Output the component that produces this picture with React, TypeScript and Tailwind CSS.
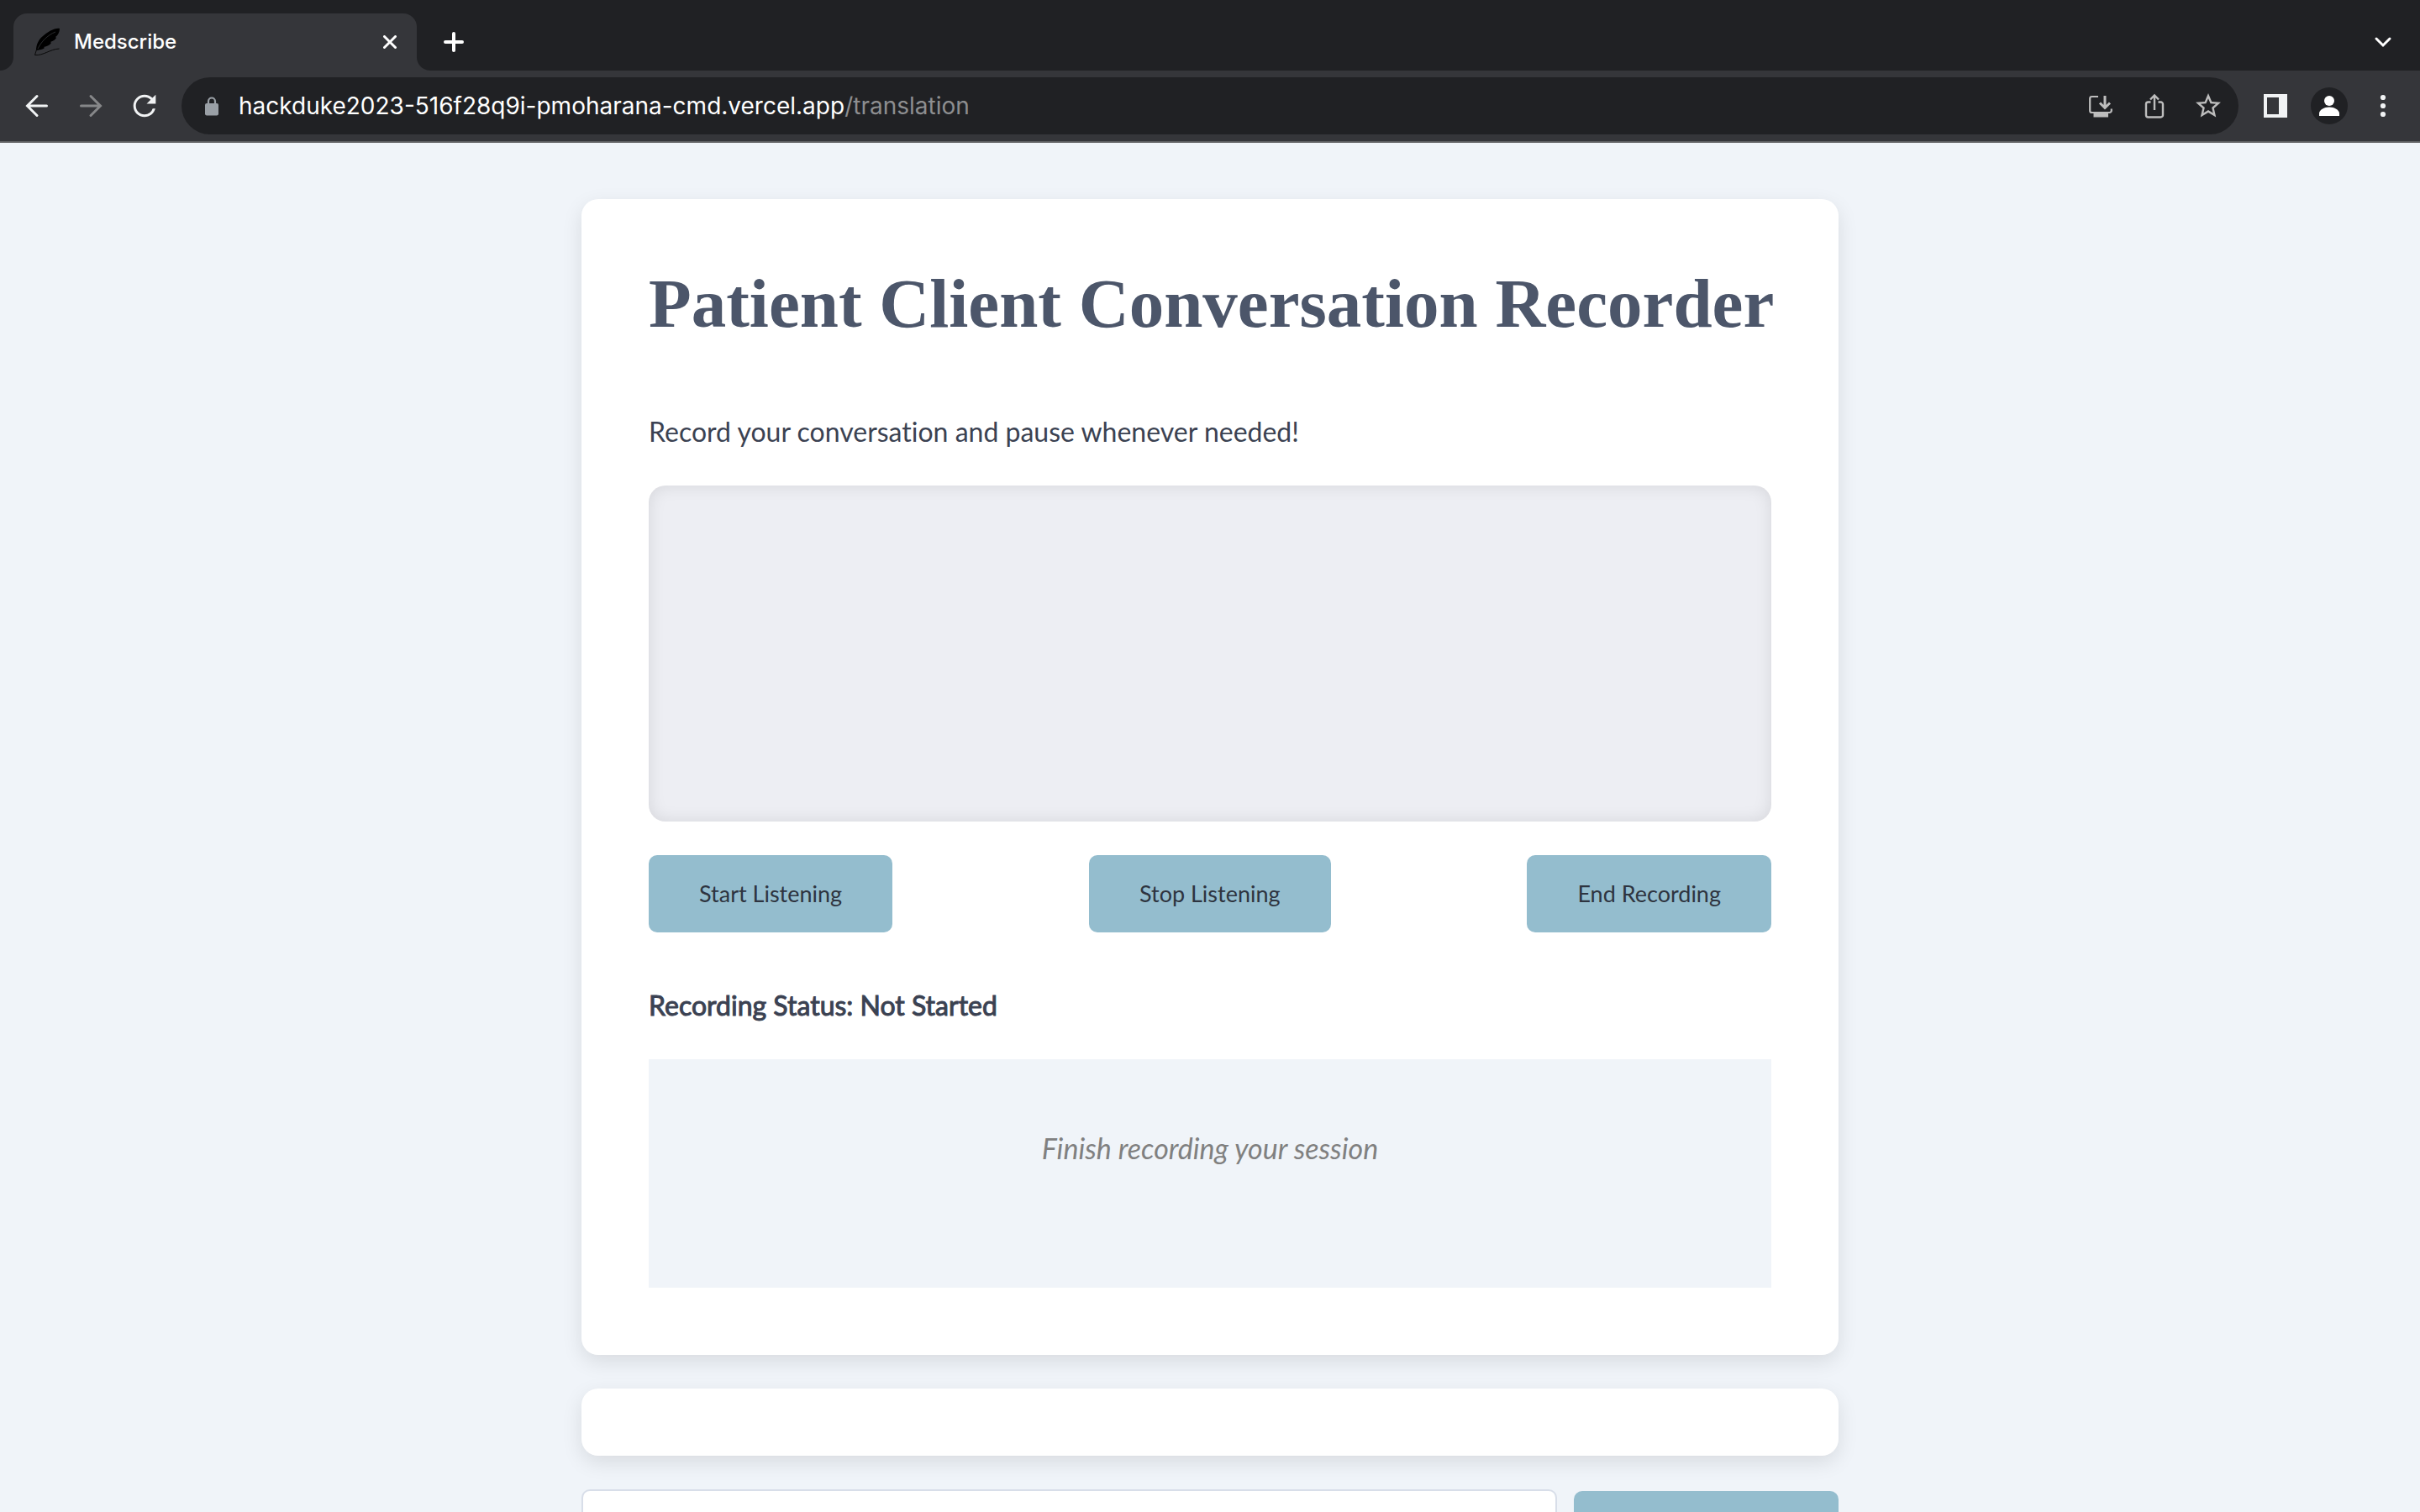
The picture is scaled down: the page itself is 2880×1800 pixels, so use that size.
import type { ReactNode } from 'react';

function IconButton({ label, children }: { label: string; children: ReactNode }) {
    return (
        <button type="button" aria-label={label} className="w-16 h-16 shrink-0 flex items-center justify-center">
            {children}
        </button>
    );
}

function TabStrip() {
    return (
        <div className="h-[84px] flex bg-[#202124]">
            {/* Active tab */}
            <div className="w-4 bg-[#35363a]">
                <div className="h-full bg-[#202124] rounded-br-2xl" />
            </div>
            <div className="w-[480px] mt-4 px-6 flex items-center bg-[#35363a] rounded-t-2xl text-white">
                <svg className="w-8 h-10 mr-4" viewBox="0 0 32 40">
                    <path fill="#000" d="M31 4C25 3 17 8 11 13 6 17 3 23 3 30c4-1 8-1 10-3l-1-1c4-1 7-2 9-5l-1-1c3-1 6-3 7-5l-1-1c3-2 5-6 5-10z" />
                    <path fill="none" stroke="#35363a" strokeWidth="0.8" d="M5 28C9 20 16 12 26 8" />
                    <path fill="none" stroke="#0a0a0a" strokeWidth="1" d="M3.5 29l-2 6.500c10 1 18-7 29-7.500" />
                </svg>
                <span className="flex-1 text-[24px] leading-8 font-medium">Medscribe</span>
                <button type="button" aria-label="Close tab">
                    <svg className="w-4 h-4" viewBox="0 0 16 16" fill="none" stroke="currentColor" strokeWidth="3" strokeLinecap="round">
                        <path d="M1.500 1.500l13 13M14.500 1.500l-13 13" />
                    </svg>
                </button>
            </div>
            <div className="w-4 bg-[#35363a]">
                <div className="h-full bg-[#202124] rounded-bl-2xl" />
            </div>
            <div className="flex-1 pt-4 pr-3 flex items-center justify-between text-white">
                <button type="button" aria-label="New tab" className="ml-4">
                    <svg className="w-6 h-7" viewBox="0 0 24 28" fill="none" stroke="currentColor" strokeWidth="4" strokeLinecap="round">
                        <path d="M12 4v20M2 14h20" />
                    </svg>
                </button>
                <IconButton label="Search tabs">
                    <svg className="w-6 h-6" viewBox="0 0 24 24" fill="none" stroke="currentColor" strokeWidth="3" strokeLinecap="round">
                        <path d="M4 8l8 8 8-8" />
                    </svg>
                </IconButton>
            </div>
        </div>
    );
}

function Toolbar() {
    return (
        <div className="h-[86px] px-3 flex items-center bg-[#35363a] border-b-2 border-[#5f6063] text-[#f1f3f4]">
            <IconButton label="Back">
                <svg className="w-8 h-8" viewBox="0 0 32 32" fill="none" stroke="currentColor" strokeWidth="3" strokeLinecap="round">
                    <path d="M27.500 16H5M16 4.500 4.500 16 16 27.500" />
                </svg>
            </IconButton>
            <IconButton label="Forward">
                <svg className="w-8 h-8 text-[#868789]" viewBox="0 0 32 32" fill="none" stroke="currentColor" strokeWidth="3" strokeLinecap="round">
                    <path d="M4.500 16H27M16 4.500 27.500 16 16 27.500" />
                </svg>
            </IconButton>
            <IconButton label="Reload">
                <svg className="w-10 h-10" viewBox="0 0 24 24" fill="currentColor">
                    <path d="M17.650 6.350A7.958 7.958 0 0 0 12 4c-4.420 0-7.990 3.580-7.990 8s3.570 8 7.990 8c3.730 0 6.840-2.550 7.730-6h-1.900A6.200 6.200 0 0 1 12 18.200c-3.420 0-6.200-2.780-6.200-6.200s2.780-6.200 6.200-6.200c1.720 0 3.250.7 4.370 1.830L13.500 10.500H20V4z" />
                </svg>
            </IconButton>

            {/* Address bar */}
            <div className="flex-1 h-[68px] mx-3 pl-5 pr-1 flex items-center rounded-full bg-[#202124] text-[#bdbdbd]">
                <svg className="w-8 h-8 mr-4" viewBox="0 0 32 32">
                    <rect x="8" y="13" width="16" height="14.500" rx="2" fill="#9aa0a6" />
                    <path d="M12 14v-3.500a4 4 0 0 1 8 0V14" fill="none" stroke="#9aa0a6" strokeWidth="2.200" />
                </svg>
                <a href="#translation" className="flex-1 text-[28px] leading-9 text-white">
                    hackduke2023-516f28q9i-pmoharana-cmd.vercel.app<span className="text-[#8d8e90]">/translation</span>
                </a>
                <IconButton label="Install app">
                    <svg className="w-8 h-8" viewBox="0 0 32 32" fill="none" stroke="currentColor" strokeWidth="2.200">
                        <path d="M13 5H5.500A2.300 2.300 0 0 0 3.200 7.300v14.400a2.300 2.300 0 0 0 2.300 2.300h21a2.300 2.300 0 0 0 2.300-2.300V19.500" />
                        <path d="M21 4v14M15 12.500l6 6 6-6" strokeWidth="3" />
                        <path d="M7.500 27h17.500" strokeWidth="5" />
                    </svg>
                </IconButton>
                <IconButton label="Share">
                    <svg className="w-8 h-8" viewBox="0 0 32 32" fill="none" stroke="currentColor" strokeWidth="2.400">
                        <path d="M11.500 11.500H8.500A2.500 2.500 0 0 0 6 14v13a2.500 2.500 0 0 0 2.500 2.500h15A2.500 2.500 0 0 0 26 27V14a2.500 2.500 0 0 0-2.500-2.500h-3" />
                        <path d="M16 21V4M11 8.500l5-5 5 5" />
                    </svg>
                </IconButton>
                <IconButton label="Bookmark this page">
                    <svg className="w-9 h-9" viewBox="0 0 24 24" fill="currentColor">
                        <path d="M22 9.240l-7.190-.620L12 2 9.190 8.630 2 9.240l5.460 4.730L5.820 21 12 17.270 18.180 21l-1.630-7.030L22 9.240zM12 15.400l-3.760 2.270 1-4.280-3.320-2.880 4.380-.380L12 6.100l1.710 4.040 4.380.380-3.320 2.880 1 4.280L12 15.400z" />
                    </svg>
                </IconButton>
            </div>

            <IconButton label="Side panel">
                <svg className="w-7 h-7" viewBox="0 0 28 28">
                    <path fill="currentColor" fillRule="evenodd" d="M0 0h28v28H0zM4 4v20h14V4z" />
                </svg>
            </IconButton>
            <IconButton label="Profile">
                <svg className="w-11 h-11" viewBox="0 0 44 44">
                    <circle cx="22" cy="22" r="22" fill="#202124" />
                    <circle cx="22" cy="16" r="6" fill="#fff" />
                    <path fill="#fff" d="M10 34v-3c0-4 6-7.500 12-7.500s12 3.500 12 7.500v3z" />
                </svg>
            </IconButton>
            <IconButton label="Menu">
                <svg className="w-8 h-8" viewBox="0 0 32 32" fill="currentColor">
                    <circle cx="16" cy="6" r="3.100" />
                    <circle cx="16" cy="16" r="3.100" />
                    <circle cx="16" cy="26" r="3.100" />
                </svg>
            </IconButton>
        </div>
    );
}

function ActionButton({ children }: { children: ReactNode }) {
    return (
        <button type="button" className="h-[92px] px-[60px] rounded-[10px] bg-[#94bdce] text-[27px] text-[#2e3440]">
            {children}
        </button>
    );
}

export default function App() {
    return (
        <div className="h-screen flex flex-col overflow-hidden bg-[#f0f4f9]">
            <header className="shrink-0 font-['Inter',sans-serif]">
                <TabStrip />
                <Toolbar />
            </header>

            <main className="w-full max-w-[1496px] mx-auto pt-[67px] flex flex-col gap-10 font-['Lato',sans-serif] [font-variant-ligatures:none] text-[#3b4252]">
                {/* Recorder */}
                <section className="p-20 rounded-[20px] bg-white shadow-[0_8px_24px_rgba(0,0,0,0.1)]">
                    <h1 className="text-[83px] leading-[89px] font-bold text-[#4c566a] text-center whitespace-nowrap font-['Liberation_Serif',serif]">
                        Patient Client Conversation Recorder
                    </h1>
                    <label htmlFor="transcript" className="block mt-[84px] text-[32px] leading-[48px]">
                        Record your conversation and pause whenever needed!
                    </label>
                    <textarea
                        id="transcript"
                        readOnly
                        className="block w-full h-[400px] mt-10 p-10 rounded-[20px] resize-none bg-[#edeef3] shadow-[inset_0_0_20px_rgba(0,0,0,0.1)]"
                    />
                    <div className="mt-10 flex justify-between">
                        <ActionButton>Start Listening</ActionButton>
                        <ActionButton>Stop Listening</ActionButton>
                        <ActionButton>End Recording</ActionButton>
                    </div>
                    <p className="mt-[63px] text-[32px] leading-[48px] [-webkit-text-stroke:1px]">
                        Recording Status: Not Started
                    </p>
                    <div className="h-[272px] mt-10 pt-20 bg-[#f0f4f9] text-center">
                        <p className="text-[34px] leading-[52px] italic text-[#808080]">Finish recording your session</p>
                    </div>
                </section>

                <section className="h-20 shrink-0 rounded-[20px] bg-white shadow-[0_8px_24px_rgba(0,0,0,0.1)]" />

                {/* Message box */}
                <form className="flex items-center gap-5">
                    <input
                        type="text"
                        aria-label="Message"
                        className="flex-1 h-24 px-5 rounded-[10px] border-2 border-[#d8dee9] bg-white text-[28px]"
                    />
                    <button type="button" aria-label="Send" className="w-[315px] h-[92px] rounded-[10px] bg-[#94bdce]" />
                </form>
            </main>
        </div>
    );
}
